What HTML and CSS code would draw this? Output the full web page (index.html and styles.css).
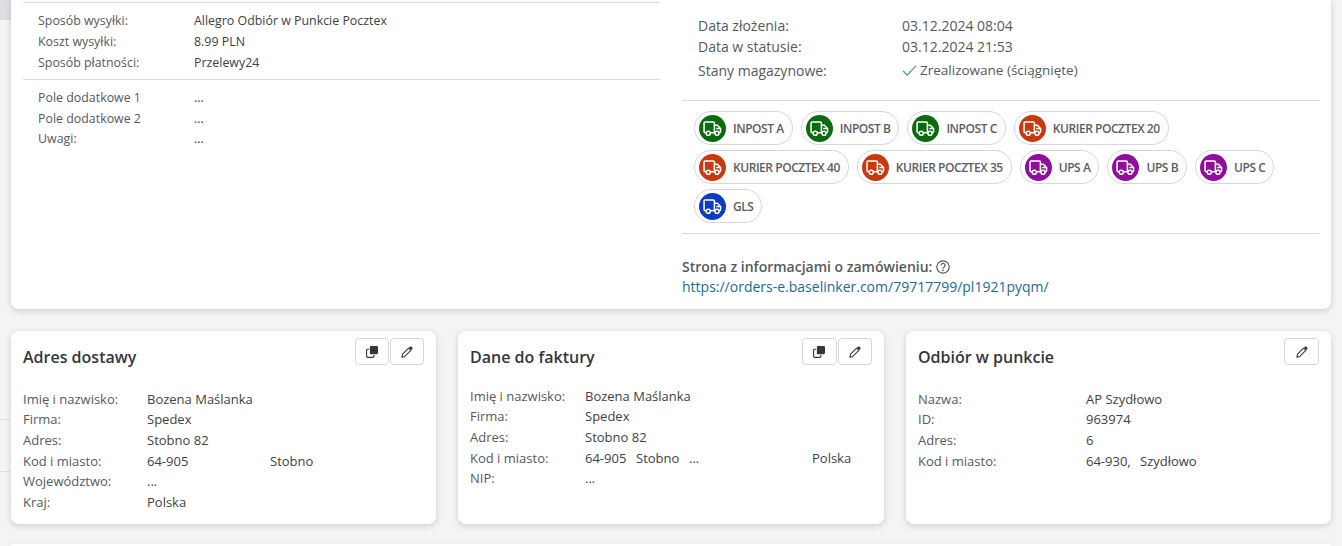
FILE: index.html
```html
<!DOCTYPE html>
<html>
<head>
<meta charset="utf-8" />
<title>Zamówienie</title>
<link rel="stylesheet" href="styles.css">
</head>
<body>

<svg class="iconDefs" xmlns="http://www.w3.org/2000/svg">
	<symbol id="truck" viewBox="0 0 20 16">
		<path d="M3 12.500H2.200A1.200 1.200 0 0 1 1 11.300V2.200A1.200 1.200 0 0 1 2.200 1H10.800A1.200 1.200 0 0 1 12 2.200V12.500H8M12 4.500H15.200L18.600 8V11.300A1.200 1.200 0 0 1 17.400 12.500H17M12.800 12.500H12M14 8H18" fill="none" stroke="currentColor" stroke-width="1.600" />
		<circle cx="5.500" cy="13" r="2.200" fill="none" stroke="currentColor" stroke-width="1.600" />
		<circle cx="14.800" cy="13" r="2.200" fill="none" stroke="currentColor" stroke-width="1.600" />
	</symbol>
	<symbol id="copy" viewBox="0 0 14 14">
		<path d="M4.500 1.500A1.500 1.500 0 0 1 6 0H12.500A1.500 1.500 0 0 1 14 1.500V8A1.500 1.500 0 0 1 12.500 9.500H4.500Z" fill="currentColor" />
		<path d="M3.500 3.800H1.700A1 1 0 0 0 .7 4.800V12.300A1 1 0 0 0 1.700 13.300H8.200A1 1 0 0 0 9.200 12.300V10.500" fill="none" stroke="currentColor" stroke-width="1.300" />
	</symbol>
	<symbol id="pencil" viewBox="0 0 14 14">
		<path d="M1 13L1.800 9.500L8.800 2.500L11.500 5.200L4.500 12.200Z" fill="none" stroke="currentColor" stroke-width="1.200" stroke-linejoin="round" />
		<path d="M9.300 2L10.500 .8A1.200 1.200 0 0 1 12.200 .8L13.200 1.800A1.200 1.200 0 0 1 13.200 3.500L12 4.700Z" fill="currentColor" />
	</symbol>
</svg>

<div class="sideTab"></div>
<div class="gutterLine lineOne"></div>
<div class="gutterLine lineTwo"></div>

<div class="page">
	<section class="card mainCard">
		<div class="leftColumn">
			<div class="infoBlock">
				<div class="infoRow"><span class="label">Sposób wysyłki:</span><span>Allegro Odbiór w Punkcie Pocztex</span></div>
				<div class="infoRow"><span class="label">Koszt wysyłki:</span><span>8.99 PLN</span></div>
				<div class="infoRow"><span class="label">Sposób płatności:</span><span>Przelewy24</span></div>
			</div>
			<div class="infoBlock">
				<div class="infoRow"><span class="label">Pole dodatkowe 1</span><span>...</span></div>
				<div class="infoRow"><span class="label">Pole dodatkowe 2</span><span>...</span></div>
				<div class="infoRow"><span class="label">Uwagi:</span><span>...</span></div>
			</div>
		</div>

		<div class="rightColumn">
			<div class="statusBlock">
				<div class="statusRow"><span>Data złożenia:</span><span>03.12.2024 08:04</span></div>
				<div class="statusRow"><span>Data w statusie:</span><span>03.12.2024 21:53</span></div>
				<div class="statusRow stockRow">
					<span>Stany magazynowe:</span>
					<span class="stockValue">
						<svg class="checkIcon" viewBox="0 0 16 12"><path d="M1 6.500L5.500 11L15 1" fill="none" stroke="#4a9a7c" stroke-width="1.400" /></svg>
						Zrealizowane (ściągnięte)
					</span>
				</div>
			</div>

			<div class="chips">
				<div class="chip"><span class="chipIcon green"><svg><use href="#truck" /></svg></span>INPOST A</div>
				<div class="chip"><span class="chipIcon green"><svg><use href="#truck" /></svg></span>INPOST B</div>
				<div class="chip"><span class="chipIcon green"><svg><use href="#truck" /></svg></span>INPOST C</div>
				<div class="chip"><span class="chipIcon red"><svg><use href="#truck" /></svg></span>KURIER POCZTEX 20</div>
				<div class="chip"><span class="chipIcon red"><svg><use href="#truck" /></svg></span>KURIER POCZTEX 40</div>
				<div class="chip"><span class="chipIcon red"><svg><use href="#truck" /></svg></span>KURIER POCZTEX 35</div>
				<div class="chip"><span class="chipIcon purple"><svg><use href="#truck" /></svg></span>UPS A</div>
				<div class="chip"><span class="chipIcon purple"><svg><use href="#truck" /></svg></span>UPS B</div>
				<div class="chip"><span class="chipIcon purple"><svg><use href="#truck" /></svg></span>UPS C</div>
				<div class="chip"><span class="chipIcon blue"><svg><use href="#truck" /></svg></span>GLS</div>
			</div>

			<div class="orderLink">
				<div class="orderLinkTitle">Strona z informacjami o zamówieniu:
					<svg class="helpIcon" viewBox="0 0 14 14">
						<circle cx="7" cy="7" r="6.200" fill="none" stroke="currentColor" stroke-width="1.200" />
						<path d="M5 5.500A2 2 0 1 1 8 7.200C7.300 7.600 7 7.900 7 8.700" fill="none" stroke="currentColor" stroke-width="1.200" />
						<circle cx="7" cy="10.400" r=".8" fill="currentColor" />
					</svg>
				</div>
				<a href="#">https://orders-e.baselinker.com/79717799/pl1921pyqm/</a>
			</div>
		</div>
	</section>

	<div class="addressCards">
		<section class="card addressCard delivery">
			<div class="cardHead">
				<h2>Adres dostawy</h2>
				<div class="buttons">
					<button><svg><use href="#copy" /></svg></button>
					<button><svg><use href="#pencil" /></svg></button>
				</div>
			</div>
			<div class="addressRows">
				<div class="addressRow"><span class="label">Imię i nazwisko:</span><span>Bozena Maślanka</span></div>
				<div class="addressRow"><span class="label">Firma:</span><span>Spedex</span></div>
				<div class="addressRow"><span class="label">Adres:</span><span>Stobno 82</span></div>
				<div class="addressRow"><span class="label">Kod i miasto:</span><span class="cityLine"><span class="postCode">64-905</span><span>Stobno</span></span></div>
				<div class="addressRow"><span class="label">Województwo:</span><span>...</span></div>
				<div class="addressRow"><span class="label">Kraj:</span><span>Polska</span></div>
			</div>
		</section>

		<section class="card addressCard invoice">
			<div class="cardHead">
				<h2>Dane do faktury</h2>
				<div class="buttons">
					<button><svg><use href="#copy" /></svg></button>
					<button><svg><use href="#pencil" /></svg></button>
				</div>
			</div>
			<div class="addressRows">
				<div class="addressRow"><span class="label">Imię i nazwisko:</span><span>Bozena Maślanka</span></div>
				<div class="addressRow"><span class="label">Firma:</span><span>Spedex</span></div>
				<div class="addressRow"><span class="label">Adres:</span><span>Stobno 82</span></div>
				<div class="addressRow"><span class="label">Kod i miasto:</span><span class="cityLine"><span class="invCode">64-905</span><span class="invCity">Stobno</span><span class="invState">...</span><span>Polska</span></span></div>
				<div class="addressRow"><span class="label">NIP:</span><span>...</span></div>
			</div>
		</section>

		<section class="card addressCard pickup">
			<div class="cardHead">
				<h2>Odbiór w punkcie</h2>
				<div class="buttons">
					<button><svg><use href="#pencil" /></svg></button>
				</div>
			</div>
			<div class="addressRows">
				<div class="addressRow"><span class="label">Nazwa:</span><span>AP Szydłowo</span></div>
				<div class="addressRow"><span class="label">ID:</span><span>963974</span></div>
				<div class="addressRow"><span class="label">Adres:</span><span>6</span></div>
				<div class="addressRow"><span class="label">Kod i miasto:</span><span class="cityLine"><span class="pickupCode">64-930,</span><span>Szydłowo</span></span></div>
			</div>
		</section>
	</div>

	<div class="card nextCard"></div>
</div>

</body>
</html>
```

FILE: styles.css
```css
html, body {
	margin: 0;
	padding: 0;
	height: 100%;
	overflow: hidden;
	font-family: "Open Sans", sans-serif;
	font-size: 13px;
	color: #3d4146;
	background: #f3f4f6;
}

.iconDefs {
	display: none;
}

.sideTab {
	position: absolute;
	left: 0;
	top: 0;
	width: 11px;
	height: 20px;
	background: #dcdee4;
}

.gutterLine {
	position: absolute;
	left: 0;
	width: 11px;
	height: 1px;
	background: #dfe1e4;
}

.lineOne {
	top: 419px;
}

.lineTwo {
	top: 471px;
}

.page {
	position: relative;
	padding: 0 11px;
}

.card {
	background: #fff;
	border-radius: 8px;
	box-shadow: 0 2px 6px rgba(40, 44, 52, 0.18);
}

.mainCard {
	display: flex;
	height: 309px;
	box-sizing: border-box;
	padding: 2px 12px 0;
	gap: 22px;
	border-radius: 0 0 8px 8px;
}

.leftColumn {
	width: 637px;
}

.infoBlock {
	border-top: 1px solid #d9dbde;
	padding: 8px 15px 5.500px;
}

.infoRow {
	display: grid;
	grid-template-columns: 156px 1fr;
	line-height: 20.800px;
	font-size: 12.400px;
}

.label {
	color: #55595e;
}

.rightColumn {
	width: 637px;
}

.statusBlock {
	padding: 13px 16px 19px;
	border-bottom: 1px solid #d9dbde;
	font-size: 14px;
	color: #55595e;
}

.statusRow {
	display: grid;
	grid-template-columns: 204px 1fr;
	line-height: 21px;
}

.stockRow {
	margin-top: 3px;
}

.stockValue {
	display: flex;
	align-items: center;
	gap: 3px;
	font-size: 13.500px;
}

.checkIcon {
	width: 15px;
	height: 11px;
}

.chips {
	display: flex;
	flex-wrap: wrap;
	gap: 5px 8px;
	padding: 10px 12px;
	border-bottom: 1px solid #d9dbde;
}

.chip {
	display: flex;
	align-items: center;
	gap: 7px;
	height: 34px;
	box-sizing: border-box;
	padding: 0 8px 0 4px;
	border: 1px solid #d4d6da;
	border-radius: 17px;
	font-size: 12px;
	font-weight: 600;
	letter-spacing: -0.450px;
	color: #5a5e63;
}

.chipIcon {
	display: flex;
	align-items: center;
	justify-content: center;
	width: 27px;
	height: 27px;
	border-radius: 50%;
	color: #fff;
}

.chipIcon svg {
	width: 19px;
	height: 15px;
}

.green {
	background: #0b6b0f;
}

.red {
	background: #c8390f;
}

.purple {
	background: #8f0f9c;
}

.blue {
	background: #0b3cc1;
}

.orderLink {
	padding-top: 23px;
	font-size: 14px;
	line-height: 20px;
}

.orderLinkTitle {
	display: flex;
	align-items: center;
	gap: 4px;
	font-weight: 600;
	color: #55595e;
}

.helpIcon {
	width: 14px;
	height: 14px;
}

.orderLink a {
	color: #1c6a92;
	text-decoration: none;
}

.addressCards {
	display: grid;
	grid-template-columns: 425px 426px 425px;
	gap: 22px;
	margin-top: 22px;
}

.addressCard {
	height: 193px;
	padding: 0 12px;
	box-sizing: border-box;
}

.cardHead {
	display: flex;
	justify-content: space-between;
	height: 48px;
	padding-top: 7px;
	box-sizing: border-box;
}

.cardHead h2 {
	margin: 7px 0 0;
	font-size: 16px;
	font-weight: 600;
	line-height: 24px;
	color: #33373c;
}

.buttons {
	display: flex;
	gap: 1px;
}

.buttons button {
	display: flex;
	align-items: center;
	justify-content: center;
	width: 34px;
	height: 27px;
	padding: 0;
	background: #fff;
	border: 1px solid #d4d6da;
	border-radius: 4px;
	color: #33373c;
}

.invoice .buttons button {
	width: 34.500px;
}

.pickup .buttons button {
	width: 35px;
}

.buttons button svg {
	width: 12px;
	height: 12px;
}

.addressRows {
	padding-top: 9.850px;
}

.invoice .addressRows {
	padding-top: 6.850px;
}

.addressRow {
	display: grid;
	grid-template-columns: 124px 1fr;
	line-height: 20.600px;
}

.invoice .addressRow {
	grid-template-columns: 115px 1fr;
}

.pickup .addressRow {
	grid-template-columns: 168px 1fr;
}

.cityLine {
	display: flex;
}

.postCode {
	width: 123px;
}

.invCode {
	width: 51px;
}

.invCity {
	width: 53px;
}

.invState {
	width: 123px;
}

.pickupCode {
	width: 54px;
}

.nextCard {
	height: 2px;
	margin-top: 20px;
	border-radius: 8px 8px 0 0;
}
```
